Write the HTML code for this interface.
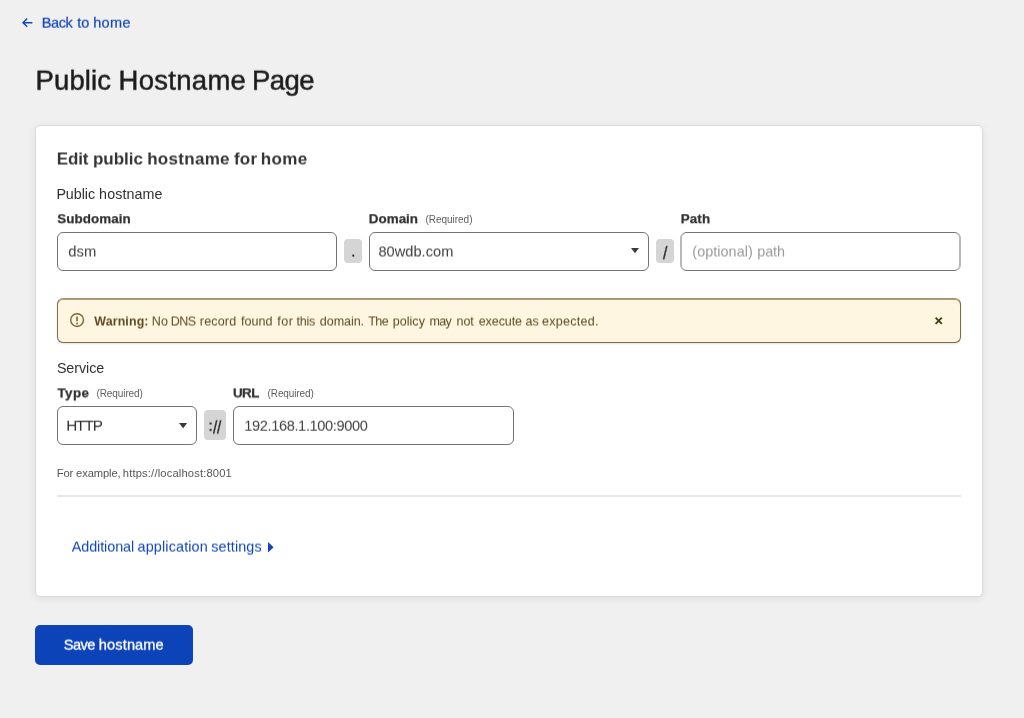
<!DOCTYPE html>
<html lang="en"><head><meta charset="utf-8"><title>Public Hostname Page</title>
<style>*{box-sizing:border-box;margin:0;padding:0}
html,body{width:1024px;height:718px;overflow:hidden}
body{background:#f0f0f0;font-family:"Liberation Sans",sans-serif;position:relative}
h1,h2,label,a,p{font:inherit;text-decoration:none}
.t{position:absolute;white-space:nowrap;display:block;will-change:transform}
.w{position:absolute;top:0;display:block;white-space:nowrap}
.abs{position:absolute}
.card{left:35px;top:125px;width:948px;height:472px;background:#fff;border:1px solid #d9d9d9;border-radius:5px;box-shadow:0 2px 8px rgba(0,0,0,0.07)}
.inp{background:#fff;border:1px solid #737373;border-radius:6px;height:38.6px}
.sep{background:#d5d5d5;border-radius:4px}
.warn{left:57px;top:298px;width:904px;height:45px;background:#fef6e1;border:1px solid #806d40;border-top-color:#a3946f;border-radius:6px;box-shadow:inset 0 1px 0 #ab9d7c,0 1px 2px rgba(0,0,0,0.12)}
.hr{left:57px;top:495px;width:904px;height:2px;background:#e9e9e9}
.btn{left:35px;top:625px;width:158px;height:39.6px;background:#0c43b8;border-radius:5px}
svg{position:absolute;overflow:visible}
</style></head>
<body>
<div class="abs card"></div>
<div class="abs inp" style="left:57px;top:232.2px;width:280.2px"></div>
<div class="abs sep" style="left:344.2px;top:239px;width:17.6px;height:23.8px"></div>
<div class="abs inp" style="left:368.8px;top:232.2px;width:280.2px"></div>
<div class="abs sep" style="left:656.2px;top:239px;width:17.8px;height:23.8px"></div>
<div class="abs inp" style="left:680px;top:232px;width:280px;will-change:transform;transform:translateX(0.5px) rotate(0.0001deg)"></div>
<svg style="left:631px;top:247.8px" width="8" height="5.2" viewBox="0 0 8 5.2"><path d="M0 0H8L4 5.2Z" fill="#3a3a3a"/></svg>
<div class="abs warn"></div>
<svg style="left:69.9px;top:313.2px" width="14.2" height="14.2" viewBox="0 0 14.2 14.2"><circle cx="7.1" cy="7.1" r="6.4" fill="none" stroke="#7a6636" stroke-width="1.4"/><path d="M7.05 3.4V8.2" stroke="#7a6636" stroke-width="1.6" fill="none"/><circle cx="7.05" cy="10.4" r="1.0" fill="#7a6636"/></svg>
<svg style="left:934.6px;top:317.2px" width="7.4" height="7.4" viewBox="0 0 7.4 7.4"><path d="M0.6 0.6L6.8 6.8M6.8 0.6L0.6 6.8" stroke="#4a3b14" stroke-width="1.8" fill="none"/></svg>
<div class="abs inp" style="left:57px;top:406.1px;width:140px"></div>
<svg style="left:179.1px;top:423px" width="8.2" height="5.2" viewBox="0 0 8.2 5.2"><path d="M0 0H8.2L4.1 5.2Z" fill="#3a3a3a"/></svg>
<div class="abs sep" style="left:204.2px;top:410px;width:21.7px;height:30.2px"></div>
<div class="abs inp" style="left:233px;top:406.1px;width:280.5px"></div>
<div class="abs hr"></div>
<svg style="left:268.3px;top:541.7px" width="5.6" height="10.6" viewBox="0 0 5.6 10.6"><path d="M0 0L5.6 5.3L0 10.6Z" fill="#1146bd"/></svg>
<div class="abs btn"></div>
<svg style="left:22.3px;top:17.9px" width="10.4" height="9.4" viewBox="0 0 10.4 9.4"><path d="M5.2 0.6L1.0 4.7L5.2 8.8M1.0 4.7H10.4" stroke="#1146bd" stroke-width="1.4" fill="none"/></svg>

<a href="#" class="t" style="left:0;width:1024px;height:20px;top:12px;transform:translateY(0.7px) rotate(0.0001deg);font-size:14.5px;line-height:20px;font-weight:400;color:#1146bd;-webkit-text-stroke:0.2px #1146bd;"><span class="w" style="left:41.77px;letter-spacing:-0.379px;">Back</span> <span class="w" style="left:77.33px;letter-spacing:-0.010px;">to</span> <span class="w" style="left:93.15px;letter-spacing:0.348px;">home</span></a>
<h1 class="t" style="left:0;width:1024px;height:38px;top:61px;transform:translateY(0.75px) rotate(0.0001deg);font-size:27.5px;line-height:38px;font-weight:400;color:#1d1d1d;-webkit-text-stroke:0.5px #1d1d1d;"><span class="w" style="left:35.60px;letter-spacing:0.115px;">Public</span> <span class="w" style="left:118.60px;letter-spacing:0.284px;">Hostname</span> <span class="w" style="left:251.95px;letter-spacing:-0.499px;">Page</span></h1>
<h2 class="t" style="left:0;width:1024px;height:24px;top:147px;transform:translateY(0.5px) rotate(0.0001deg);font-size:17.0px;line-height:24px;font-weight:700;color:#353535;"><span class="w" style="left:56.67px;letter-spacing:-0.107px;">Edit</span> <span class="w" style="left:92.90px;letter-spacing:0.020px;">public</span> <span class="w" style="left:147.18px;letter-spacing:0.302px;">hostname</span> <span class="w" style="left:233.95px;letter-spacing:0.265px;">for</span> <span class="w" style="left:260.68px;letter-spacing:0.422px;">home</span></h2>
<div class="t" style="left:0;width:1024px;height:20px;top:184px;font-size:14.3px;line-height:20px;font-weight:400;color:#313131;"><span class="w" style="left:56.38px;letter-spacing:-0.049px;">Public</span> <span class="w" style="left:99.12px;letter-spacing:0.094px;">hostname</span></div>
<label class="t" style="left:0;width:1024px;height:19px;top:209px;transform:translateY(0.2px) rotate(0.0001deg);font-size:13.4px;line-height:19px;font-weight:700;color:#313131;-webkit-text-stroke:0.25px #313131;"><span class="w" style="left:57.25px;letter-spacing:0.061px;">Subdomain</span></label>
<label class="t" style="left:0;width:1024px;height:19px;top:209px;transform:translateY(0.2px) rotate(0.0001deg);font-size:13.4px;line-height:19px;font-weight:700;color:#313131;-webkit-text-stroke:0.25px #313131;"><span class="w" style="left:368.75px;letter-spacing:0.040px;">Domain</span></label>
<div class="t" style="left:0;width:1024px;height:14px;top:213px;font-size:10.0px;line-height:14px;font-weight:400;color:#5e5e5e;"><span class="w" style="left:425.40px;letter-spacing:-0.018px;">(Required)</span></div>
<label class="t" style="left:0;width:1024px;height:19px;top:209px;transform:translateY(0.2px) rotate(0.0001deg);font-size:13.4px;line-height:19px;font-weight:700;color:#313131;-webkit-text-stroke:0.25px #313131;"><span class="w" style="left:680.65px;letter-spacing:0.167px;">Path</span></label>
<div class="t" style="left:0;width:1024px;height:21px;top:241px;transform:translateY(0.5px) rotate(0.0001deg);font-size:14.8px;line-height:21px;font-weight:400;color:#404040;"><span class="w" style="left:68.20px;letter-spacing:0.048px;">dsm</span></div>
<div class="t" style="left:0;width:1024px;height:20px;top:241px;transform:translateY(0.5px) rotate(0.0001deg);font-size:14.6px;line-height:20px;font-weight:400;color:#404040;"><span class="w" style="left:378.38px;letter-spacing:0.035px;">80wdb.com</span></div>
<div class="t" style="left:0;width:1024px;height:20px;top:241px;transform:translateY(0.5px) rotate(0.0001deg);font-size:14.4px;line-height:20px;font-weight:400;color:#9a9a9a;"><span class="w" style="left:692.33px;letter-spacing:0.049px;">(optional)</span> <span class="w" style="left:757.23px;letter-spacing:-0.089px;">path</span></div>
<div class="t" style="left:0;width:1024px;height:25px;top:238px;transform:translateY(0.6px) rotate(0.0001deg);font-size:18px;line-height:25px;font-weight:400;color:#222;-webkit-text-stroke:0.1px #222;"><span class="w" style="left:350.80px;letter-spacing:0.000px;">.</span></div>
<div class="t" style="left:0;width:1024px;height:27px;top:239px;transform:translateY(0.2px) rotate(0.0001deg);font-size:19.2px;line-height:27px;font-weight:400;color:#2a2a2a;-webkit-text-stroke:0.4px #2a2a2a;"><span class="w" style="left:663.25px;letter-spacing:0.000px;transform:scaleX(0.82);transform-origin:0 0;">/</span></div>
<div class="t" style="left:0;width:1024px;height:17px;top:313px;transform:translateY(0.5px) rotate(0.0001deg);font-size:12.4px;line-height:17px;font-weight:700;color:#5b4a22;"><span class="w" style="left:94.30px;letter-spacing:0.139px;">Warning:</span></div>
<div class="t" style="left:0;width:1024px;height:18px;top:312px;transform:translateY(0.5px) rotate(0.0001deg);font-size:12.55px;line-height:18px;font-weight:400;color:#5c4b20;"><span class="w" style="left:151.82px;letter-spacing:0.005px;">No</span> <span class="w" style="left:170.74px;letter-spacing:-0.595px;">DNS</span> <span class="w" style="left:199.85px;letter-spacing:0.142px;">record</span> <span class="w" style="left:240.88px;letter-spacing:0.038px;">found</span> <span class="w" style="left:277.20px;letter-spacing:0.605px;">for</span> <span class="w" style="left:296.38px;letter-spacing:-0.201px;">this</span> <span class="w" style="left:319.80px;letter-spacing:-0.055px;">domain.</span> <span class="w" style="left:368.20px;letter-spacing:-0.595px;">The</span> <span class="w" style="left:392.85px;letter-spacing:-0.002px;">policy</span> <span class="w" style="left:429.38px;letter-spacing:-0.595px;">may</span> <span class="w" style="left:456.55px;letter-spacing:-0.104px;">not</span> <span class="w" style="left:478.70px;letter-spacing:-0.095px;">execute</span> <span class="w" style="left:525.47px;letter-spacing:0.005px;">as</span> <span class="w" style="left:542.10px;letter-spacing:0.237px;">expected.</span></div>
<div class="t" style="left:0;width:1024px;height:20px;top:358px;font-size:14.3px;line-height:20px;font-weight:400;color:#313131;"><span class="w" style="left:56.88px;letter-spacing:-0.038px;">Service</span></div>
<label class="t" style="left:0;width:1024px;height:19px;top:383px;transform:translateY(0.4px) rotate(0.0001deg);font-size:13.4px;line-height:19px;font-weight:700;color:#313131;-webkit-text-stroke:0.25px #313131;"><span class="w" style="left:57.50px;letter-spacing:0.433px;">Type</span></label>
<div class="t" style="left:0;width:1024px;height:14px;top:387px;font-size:10.0px;line-height:14px;font-weight:400;color:#5e5e5e;"><span class="w" style="left:96.50px;letter-spacing:-0.096px;">(Required)</span></div>
<label class="t" style="left:0;width:1024px;height:19px;top:383px;transform:translateY(0.4px) rotate(0.0001deg);font-size:13.4px;line-height:19px;font-weight:700;color:#313131;-webkit-text-stroke:0.25px #313131;"><span class="w" style="left:232.97px;letter-spacing:-0.563px;">URL</span></label>
<div class="t" style="left:0;width:1024px;height:14px;top:387px;font-size:10.0px;line-height:14px;font-weight:400;color:#5e5e5e;"><span class="w" style="left:267.60px;letter-spacing:-0.118px;">(Required)</span></div>
<div class="t" style="left:0;width:1024px;height:21px;top:414px;transform:translateY(0.7px) rotate(0.0001deg);font-size:15.3px;line-height:21px;font-weight:400;color:#313131;"><span class="w" style="left:66.15px;letter-spacing:-1.063px;">HTTP</span></div>
<div class="t" style="left:0;width:1024px;height:21px;top:414px;transform:translateY(0.7px) rotate(0.0001deg);font-size:15.0px;line-height:21px;font-weight:400;color:#2a2a2a;-webkit-text-stroke:0.5px #2a2a2a;"><span class="w" style="left:208.44px;letter-spacing:0.000px;">:</span></div>
<div class="t" style="left:0;width:1024px;height:27px;top:413px;transform:translateY(0.5px) rotate(0.0001deg);font-size:19.2px;line-height:27px;font-weight:400;color:#2a2a2a;-webkit-text-stroke:0.4px #2a2a2a;"><span class="w" style="left:212.75px;letter-spacing:0.000px;transform:scaleX(0.8);transform-origin:0 0;">/</span> <span class="w" style="left:217.40px;letter-spacing:0.000px;transform:scaleX(0.8);transform-origin:0 0;">/</span></div>
<div class="t" style="left:0;width:1024px;height:20px;top:415px;transform:translateY(0.7px) rotate(0.0001deg);font-size:14.6px;line-height:20px;font-weight:400;color:#404040;"><span class="w" style="left:244.20px;letter-spacing:-0.359px;">192.168.1.100:9000</span></div>
<p class="t" style="left:0;width:1024px;height:16px;top:465px;font-size:11.2px;line-height:16px;font-weight:400;color:#555;"><span class="w" style="left:56.73px;letter-spacing:-0.126px;">For example,</span> <span class="w" style="left:122.85px;letter-spacing:0.152px;">https://localhost:8001</span></p>
<a href="#" class="t" style="left:0;width:1024px;height:20px;top:536px;transform:translateY(0.6px) rotate(0.0001deg);font-size:14.4px;line-height:20px;font-weight:400;color:#1146bd;"><span class="w" style="left:71.70px;letter-spacing:-0.077px;">Additional</span> <span class="w" style="left:137.60px;letter-spacing:0.134px;">application</span> <span class="w" style="left:211.23px;letter-spacing:0.122px;">settings</span></a>
<div class="t" style="left:0;width:1024px;height:20px;top:634px;transform:translateY(0.7px) rotate(0.0001deg);font-size:14.6px;line-height:20px;font-weight:400;color:#ffffff;-webkit-text-stroke:0.3px #ffffff;"><span class="w" style="left:63.72px;letter-spacing:-0.511px;">Save</span> <span class="w" style="left:98.85px;letter-spacing:0.115px;">hostname</span></div>
</body></html>
